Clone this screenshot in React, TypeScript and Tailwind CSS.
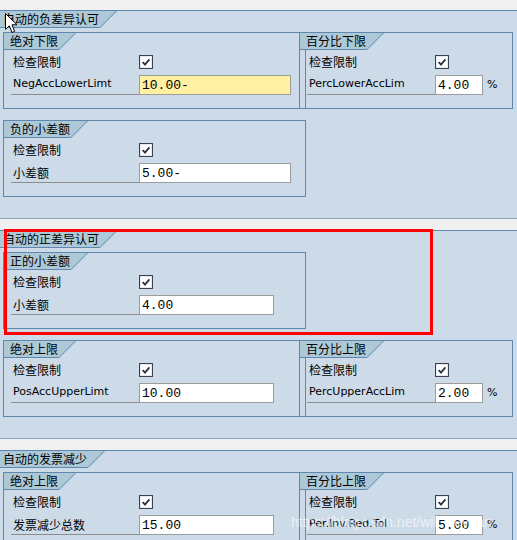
import React from "react";

function Tab({ label, pl }: { label: string; pl: string }) {
  return (
    <div className="flex h-[17px] items-stretch">
      <div
        className={`${pl} pr-[1px] bg-[#adc9d8] border-b border-[#5f88b0] text-[12px] leading-[16px] text-black whitespace-nowrap`}
      >
        {label}
      </div>
      <svg width="17" height="17" className="block shrink-0">
        <polygon points="0,0 17,0 0,17" fill="#adc9d8" />
        <line x1="0" y1="16.5" x2="16.5" y2="0" stroke="#5f88b0" strokeWidth="1" />
      </svg>
    </div>
  );
}

function Check() {
  return (
    <svg width="14" height="14" className="block shrink-0">
      <rect x="0.5" y="0.5" width="13" height="13" fill="#ffffff" stroke="#3a4052" />
      <rect x="1.5" y="1.5" width="11" height="11" fill="none" stroke="#e4e8ee" />
      <path d="M3.6 7.2 L6 9.6 L10.4 4.4" fill="none" stroke="#2a3142" strokeWidth="1.8" />
    </svg>
  );
}

function Label({ text, latin, underline }: { text: string; latin?: boolean; underline?: boolean }) {
  return (
    <div
      className={`w-[128px] shrink-0 h-[20px] pl-[2px] flex items-center whitespace-nowrap text-black ${
        underline ? "border-b border-[#8c8c8c]" : ""
      } ${latin ? "font-['DejaVu_Sans',sans-serif] text-[11px]" : "text-[12px]"}`}
    >
      {text}
    </div>
  );
}

function Input({ value, w, yellow }: { value: string; w: string; yellow?: boolean }) {
  return (
    <div
      className={`${w} h-[20px] shrink-0 border border-[#9c9c9c] ${
        yellow ? "bg-[#fff0a2]" : "bg-white"
      } pl-[2px] flex items-center font-['Liberation_Mono',monospace] text-[13px] text-black leading-none`}
    >
      {value}
    </div>
  );
}

function Rows({
  label,
  latin,
  value,
  w,
  yellow,
  pct,
}: {
  label: string;
  latin?: boolean;
  value: string;
  w: string;
  yellow?: boolean;
  pct?: boolean;
}) {
  return (
    <div className="pt-[2px] pb-[13px]">
      <div className="flex h-[20px] items-center">
        <Label text="检查限制" />
        <Check />
      </div>
      <div className="mt-[3px] flex h-[20px] items-center">
        <Label text={label} latin={latin} underline />
        <Input value={value} w={w} yellow={yellow} />
        {pct && (
          <span className="ml-[4px] font-['DejaVu_Sans',sans-serif] text-[11px] text-black">%</span>
        )}
      </div>
    </div>
  );
}

function LeftBox({
  title,
  width,
  label,
  latin,
  value,
  inputW,
  yellow,
}: {
  title: string;
  width: string;
  label: string;
  latin?: boolean;
  value: string;
  inputW: string;
  yellow?: boolean;
}) {
  return (
    <div className={`${width} shrink-0 border border-[#5f88b0]`}>
      <Tab label={title} pl="pl-[6px]" />
      <div className="pl-[7px]">
        <Rows label={label} latin={latin} value={value} w={inputW} yellow={yellow} />
      </div>
    </div>
  );
}

function RightBox({ title, label, value }: { title: string; label: string; value: string }) {
  return (
    <div className="w-[213px] shrink-0 border-t border-r border-b border-[#5f88b0]">
      <Tab label={title} pl="pl-[6px]" />
      <div className="ml-[5px] border-l border-[#5f88b0] pl-[1px]">
        <Rows label={label} latin value={value} w="w-[48px]" pct />
      </div>
    </div>
  );
}

function Section({ title, children }: { title: string; children: React.ReactNode }) {
  return (
    <div className="border-t border-b border-t-[#5f88b0] border-b-[#8ba6c2] bg-[#cddbe8]">
      <Tab label={title} pl="pl-[3px]" />
      <div className="pl-[3px] pt-[4px] pb-[21px]">{children}</div>
    </div>
  );
}

export default function App() {
  return (
    <div className="relative w-[517px] h-[540px] overflow-hidden bg-[#f0f0f0] pt-[10px] font-['Noto_Sans_CJK_SC',sans-serif]">
      <Section title="自动的负差异认可">
        <div className="flex">
          <LeftBox
            title="绝对下限"
            width="w-[297px]"
            label="NegAccLowerLimt"
            latin
            value="10.00-"
            inputW="w-[152px]"
            yellow
          />
          <RightBox title="百分比下限" label="PercLowerAccLim" value="4.00" />
        </div>
        <div className="mt-[11px]">
          <LeftBox title="负的小差额" width="w-[303px]" label="小差额" value="5.00-" inputW="w-[152px]" />
        </div>
      </Section>

      <div className="mt-[11px]">
        <Section title="自动的正差异认可">
          <LeftBox title="正的小差额" width="w-[303px]" label="小差额" value="4.00" inputW="w-[135px]" />
          <div className="mt-[11px] flex">
            <LeftBox
              title="绝对上限"
              width="w-[297px]"
              label="PosAccUpperLimt"
              latin
              value="10.00"
              inputW="w-[135px]"
            />
            <RightBox title="百分比上限" label="PercUpperAccLim" value="2.00" />
          </div>
        </Section>
      </div>

      <div className="mt-[11px]">
        <Section title="自动的发票减少">
          <div className="flex">
            <LeftBox title="绝对上限" width="w-[297px]" label="发票减少总数" value="15.00" inputW="w-[135px]" />
            <RightBox title="百分比上限" label="Per.Inv.Red.Tol" value="5.00" />
          </div>
        </Section>
      </div>

      {/* red annotation rectangle */}
      <div className="absolute left-[4px] top-[229px] w-[429px] h-[106px] border-[3px] border-[#ff0000] pointer-events-none" />

      {/* mouse cursor */}
      <svg width="14" height="22" className="absolute left-[5px] top-[13px]">
        <path
          d="M0.5 0.5 L0.5 16.5 L4.3 12.8 L7 19.5 L9.6 18.4 L7 11.8 L12 11.8 Z"
          fill="#ffffff"
          stroke="#000000"
          strokeWidth="1"
          strokeLinejoin="miter"
        />
      </svg>

      {/* watermark */}
      <div className="absolute left-[291px] top-[512px] font-['Liberation_Sans',sans-serif] text-[14px] text-white/60 whitespace-nowrap pointer-events-none">
        https://blog.csdn.net/will_lieyuan
      </div>
    </div>
  );
}
